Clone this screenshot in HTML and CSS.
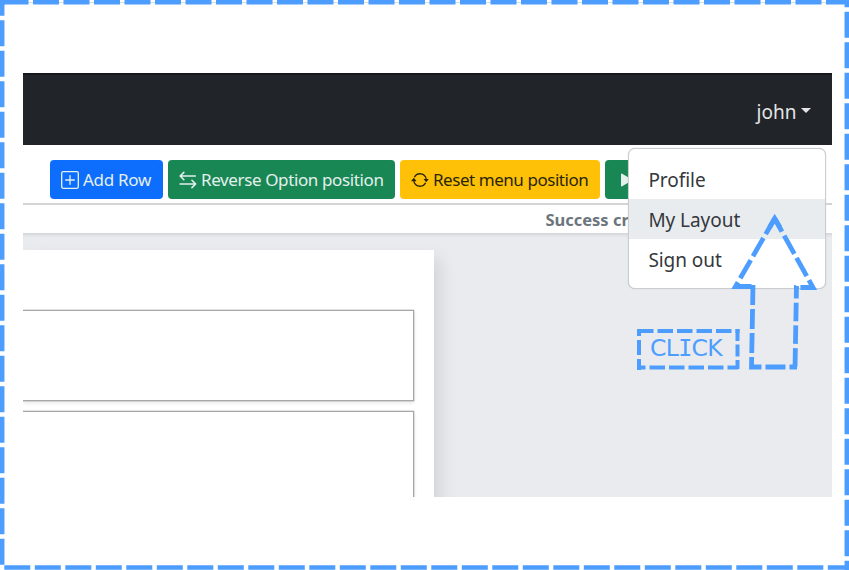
FILE: index.html
```html
<!DOCTYPE html>
<html lang="en">
<head>
<meta charset="utf-8">
<title>My Layout</title>
<link rel="stylesheet" href="styles.css">
</head>
<body>
<main class="app">
  <nav class="navbar"><span class="user">john</span><span class="caret"></span></nav>
  <div class="toolbar">
    <button class="btn add"><svg width="18" height="18" viewBox="0 0 16 16" fill="none" stroke="currentColor" stroke-width="1.200"><rect x=".6" y=".6" width="14.8" height="14.8" rx="1.3"/><path d="M8 4.200v7.600M4.200 8h7.600" stroke-linecap="round"/></svg><span>Add Row</span></button>
    <button class="btn reverse"><svg width="18" height="18" viewBox="0 0 16 16" fill="none" stroke="currentColor" stroke-width="1.400" stroke-linecap="round" stroke-linejoin="round"><path d="M4.300 1.200 1 4.500 4.300 7.800M1 4.500h13.500M11.500 8.200 14.800 11.500 11.500 14.800M14.800 11.500H1"/></svg><span>Reverse Option position</span></button>
    <button class="btn reset"><svg width="18" height="18" viewBox="0 0 16 16"><path d="M11.534 7h3.932a.25.25 0 0 1 .192.41l-1.966 2.360a.25.25 0 0 1-.384 0l-1.966-2.360a.25.25 0 0 1 .192-.41zm-11 2h3.932a.25.25 0 0 0 .192-.41L2.692 6.230a.25.25 0 0 0-.384 0L.342 8.590A.25.25 0 0 0 .534 9z" fill="currentColor"/><path d="M3 5.500a5.600 5.600 0 0 1 10.500 1.500M13 10.500A5.600 5.600 0 0 1 2.500 9" fill="none" stroke="currentColor" stroke-width="1.200"/></svg><span>Reset menu position</span></button>
    <button class="btn play"><svg width="14" height="14" viewBox="0 0 14 14"><path d="M1 1.500Q1 .2 2.200.8L11 6q1.400 1 0 2L2.200 13.200Q1 13.800 1 12.500z" fill="currentColor"/></svg></button>
  </div>
  <div class="status">Success cr</div>
  <section class="workspace">
    <div class="sheet"><div class="row"></div><div class="row tall"></div></div>
  </section>
  <div class="menu">
    <a class="item profile">Profile</a>
    <a class="item layout active">My Layout</a>
    <a class="item signout">Sign out</a>
  </div>
</main>
<svg class="annotations" viewBox="0 0 849 570" fill="none" stroke="#4d9dff">
  <path d="M0 2.500h849" stroke="#c8cbd0" stroke-width=".7"/>
  <g stroke-width="4.500">
    <path d="M2.200 2.200H849" stroke-dasharray="26 4.500" stroke-dashoffset="-.3"/>
    <path d="M846.800 0V570" stroke-dasharray="26 4.500" stroke-dashoffset="18.800"/>
    <path d="M4.300 567.500H849" stroke-dasharray="26 4.500"/>
    <path d="M2.200 0V565.500" stroke-dasharray="26 4.500" stroke-dashoffset="10.200"/>
    <path d="M0 2.200H5"/>
  </g>
  <g stroke-width="4">
    <path d="M637 331H739.500" stroke-dasharray="15.500 4" stroke-dashoffset="-1"/>
    <path d="M737.500 329V369" stroke-dasharray="12 3.500"/>
    <path d="M738 367.500H637" stroke-dasharray="15.500 4" stroke-dashoffset="5"/>
    <path d="M639 370V329" stroke-dasharray="15 4" stroke-dashoffset="4"/>
  </g>
  <g stroke-width="4.800">
    <path d="M774.700 218.500 735.500 286.500H755" stroke-dasharray="21 4.500" stroke-dashoffset="3"/>
    <path d="M774.700 218.500 813 287.500H794" stroke-dasharray="21 4.500" stroke-dashoffset="6"/>
    <path d="M753 285 751.500 367H797" stroke-dasharray="20 4"/>
    <path d="M796.500 286 795 369" stroke-dasharray="18.500 4.200" stroke-dashoffset="6"/>
    <path d="M769.500 227.500 774.700 218.500 780 227.500" stroke-miterlimit="8"/>
  </g>
</svg>
<div class="click">CL<span class="slab">I</span>CK</div>
</body>
</html>
```
FILE: styles.css
```css
* { box-sizing: border-box; }
body {
  margin: 0;
  width: 849px;
  height: 570px;
  overflow: hidden;
  padding: 73px 16.6px 73.5px 23.4px;
  background: #fff;
  font-family: "Noto Sans", sans-serif;
}
.app {
  position: relative;
  height: 423.5px;
  display: flex;
  flex-direction: column;
}
.navbar {
  height: 72px;
  flex: none;
  display: flex;
  justify-content: flex-end;
  align-items: center;
  gap: 5px;
  padding: 3px 21px 0 0;
  background: #212529;
  border-top: 2px solid #17181d;
  color: #e4e5e6;
  font-size: 19px;
}
.caret {
  border: 5px solid transparent;
  border-top-color: #e4e5e6;
  border-bottom: 0;
  margin-bottom: 3px;
}
.toolbar {
  height: 60px;
  flex: none;
  display: flex;
  gap: 5px;
  padding: 15px 0 0 26.600px;
  border-bottom: 2px solid #d3d4d6;
}
.btn {
  height: 38.500px;
  flex: none;
  display: flex;
  align-items: center;
  gap: 4px;
  padding: 1px 0 0 11px;
  border: 0;
  border-radius: 4px;
  color: #e4f0ee;
  font: 17px "Noto Sans", sans-serif;
  white-space: nowrap;
}
.btn svg { flex: none; }
.add { width: 113px; background: #0d6efd; letter-spacing: -.3px; }
.reverse { width: 227px; background: #198754; letter-spacing: -.38px; }
.reset { width: 200px; background: #ffc107; color: #292508; letter-spacing: -.45px; }
.play { width: 60px; background: #198754; padding-left: 15px; }
.status {
  height: 27.500px;
  flex: none;
  padding-left: 522px;
  color: #6c757d;
  font-size: 16.500px;
  font-weight: 700;
  line-height: 30px;
}
.workspace {
  flex: 1;
  min-height: 0;
  overflow: hidden;
  padding-top: 17px;
  background: #eaebef;
  box-shadow: inset 0 5px 4px -4px #c8c9cd;
}
.sheet {
  width: 410.500px;
  height: 300px;
  padding: 60.500px 20px 0 0;
  background: #fff;
  box-shadow: 6px 8px 16px rgba(0, 0, 0, .1);
}
.row {
  height: 91px;
  margin-bottom: 10px;
  border: 1px solid #a6a6a6;
  border-left: 0;
  box-shadow: 0 2px 4px rgba(0, 0, 0, .1), 0 0 0 .5px #ccc;
}
.tall { height: 130px; }
.menu {
  position: absolute;
  left: 604.500px;
  top: 75px;
  width: 198px;
  height: 141px;
  padding-top: 10px;
  border: 1.500px solid #cbcccf;
  border-radius: 7px;
  background: #fff;
  box-shadow: 0 0 1px #bbb;
}
.item {
  display: block;
  height: 40px;
  padding-left: 19.500px;
  font-size: 19px;
  line-height: 42px;
  letter-spacing: -.05px;
  color: #34383c;
}
.active { background: #e9ecef; }
.annotations {
  position: absolute;
  left: 0;
  top: 0;
  width: 849px;
  height: 570px;
}
.click {
  position: absolute;
  left: 650px;
  top: 334px;
  color: #4d9dff;
  font: 23.5px/29px "DejaVu Sans", sans-serif;
  letter-spacing: -.6px;
}
.slab {
  font-family: "DejaVu Sans Mono", monospace;
  letter-spacing: -1px;
}
```
